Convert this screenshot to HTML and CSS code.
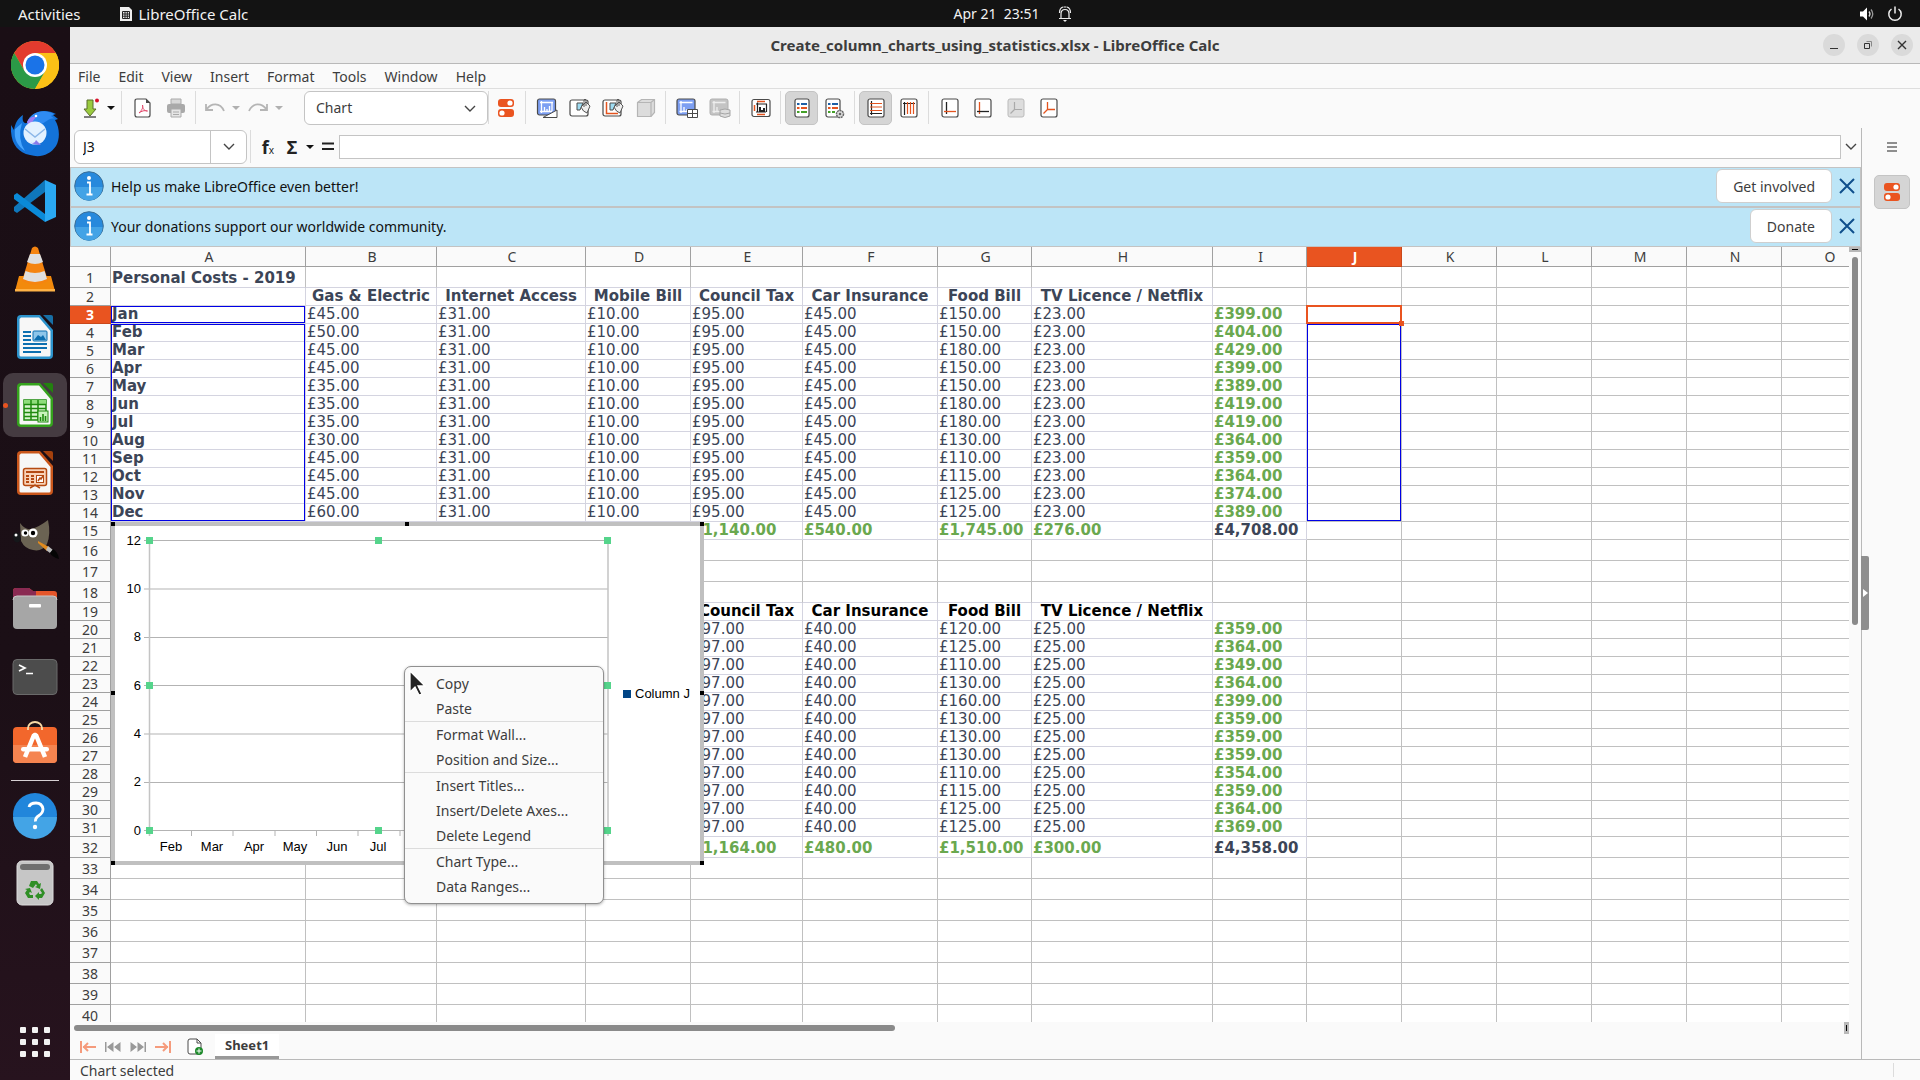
FILE: index.html
```html
<!DOCTYPE html>
<html lang="en">
<head>
  <meta charset="utf-8">
  <title>Create_column_charts_using_statistics.xlsx - LibreOffice Calc</title>
  <link rel="stylesheet" href="styles.css">
</head>
<body>
<header class="topbar">
  <div class="topbar-left">
    <button class="topbar-item">Activities</button>
    <button class="topbar-item app-menu">
      <svg width="14" height="16" viewBox="0 0 14 16"><path d="M1 1h9l3 3v11H1z" fill="#eee"/><path d="M3.500 5.500h7v7h-7zM3.500 8h7M3.500 10.200h7M6 5.500v7M8.300 5.500v7" stroke="#222" fill="none"/></svg>
      LibreOffice Calc
    </button>
  </div>
  <div class="topbar-clock">
    <span>Apr 21&nbsp; 23:51</span>
    <svg width="14" height="16" viewBox="0 0 14 16" fill="none" stroke="#eee" stroke-width="1.200"><path d="M1 12.500h12M3 12V8q0-4.500 4-4.500T11 8v4M1.500 7Q1.500 2 5 1M12.500 7Q12.500 2 9 1M5.500 1h3"/><path d="M5 14h4l-2 2z" fill="#eee" stroke="none"/></svg>
  </div>
  <div class="topbar-right">
    <svg width="16" height="16" viewBox="0 0 16 16"><path d="M1 5.500h3L8 1.500v13L4 10.500H1z" fill="#fff"/><path d="M10 5.500q2 2.500 0 5" fill="none" stroke="#ddd" stroke-width="1.300"/><path d="M12 3.500q3.500 4.500 0 9" fill="none" stroke="#999" stroke-width="1.300"/></svg>
    <svg width="16" height="16" viewBox="0 0 16 16" fill="none" stroke="#eee" stroke-width="1.500"><path d="M4.500 3a6.200 6.200 0 1 0 7 0M8 .5v7"/></svg>
  </div>
</header>

<div class="desktop">
  <nav class="dock">
    <button class="dock-item" aria-label="Google Chrome">
      <svg width="48" height="48" viewBox="0 0 48 48"><circle cx="24" cy="24" r="24" fill="#fbc116"/><path d="M3.200 12A24 24 0 0 1 44.800 12H24L13.600 30z" fill="#e33b2e"/><path d="M3.200 12A24 24 0 0 0 24 48L34.400 30 24 24 13.600 30z" fill="#2b9a47"/><path d="M24 12h20.800A24 24 0 0 1 24 48l10.400-18z" fill="#fbc116"/><circle cx="24" cy="24" r="12" fill="#fff"/><circle cx="24" cy="24" r="9.500" fill="#1a73e8"/></svg>
    </button>
    <button class="dock-item" aria-label="Thunderbird">
      <svg width="48" height="48" viewBox="0 0 48 48"><path d="M16 14C20 2 34-1 45 5l-3 1 5 4-3 1c5 8 5 19 1 26-6 9-16 12-26 9C6 43-1 34 0 16l3 5C4 14 7 9 12 6c-1 5 0 9 4 8z" fill="#1373d9"/><path d="M16 13C20 3 32-1 43 5l-3 2 4 3c-6-2-9 4-14 5-5 0-8-3-14-2z" fill="#2f8bf2"/><path d="M4 20q-2 14 10 22Q6 30 11 14z" fill="#47a6ff"/><path d="M16 13q3-6 9-5-3 5-8 8z" fill="#a27cf0"/><circle cx="24" cy="24" r="11.500" fill="#e3f1ff"/><path d="M14 20l10 8 10-8" fill="none" stroke="#8cb7e8" stroke-width="1.500"/><path d="M15 31q8 6 10 0l5 5q-8 0-15-5z" fill="#8b7bea"/><circle cx="25" cy="7" r="1.300" fill="#fff"/></svg>
    </button>
    <button class="dock-item" aria-label="Visual Studio Code">
      <svg width="48" height="48" viewBox="0 0 48 48"><path d="M34 3L3 30v4l3 2 28-21z" fill="#0f77bb"/><path d="M3 18l3-2 28 21v8L3 22z" fill="#0a8ad8"/><path d="M34 3l11 5v32l-11 5z" fill="#2aa8f2"/></svg>
    </button>
    <button class="dock-item" aria-label="VLC">
      <svg width="48" height="48" viewBox="0 0 48 48"><path d="M8 31h32l4 15H4z" fill="#f28a0c"/><path d="M4 44h40v2.500H4z" fill="#ffb347"/><path d="M21 3q3-3 6 0l10 33q-13 7-26 0z" fill="#f58410"/><path d="M19 9h10l3 8q-8 4-16 0zM14.500 26q9.500 4 19 0l2.500 8q-12 6-24 0z" fill="#dfdfdf"/></svg>
    </button>
    <button class="dock-item" aria-label="LibreOffice Writer">
      <svg width="48" height="48" viewBox="0 0 48 48"><path d="M10 2h19l13 15v25q0 4-4 4H10q-4 0-4-4V6q0-4 4-4z" fill="#2c93cc"/><path d="M10 4.500h18l11.500 13.500V42q0 1.500-1.500 1.500H10q-1.500 0-1.500-1.500V6z" fill="#f7f7f7"/><path d="M32 2h8q2 0 2 2v8z" fill="#176fa6"/><path d="M12 19h8M12 23h8M12 27h8M12 31h24M12 35h24M12 39h18" stroke="#0d6fb0" stroke-width="2"/><rect x="22" y="18" width="14" height="10" rx="1" fill="#8ec6ea" stroke="#0d6fb0"/><path d="M23 27l4-5 3 2 2-2 3 5z" fill="#0d6fb0"/></svg>
    </button>
    <button class="dock-item active" aria-label="LibreOffice Calc">
      <svg width="48" height="48" viewBox="0 0 48 48"><path d="M10 2h19l13 15v25q0 4-4 4H10q-4 0-4-4V6q0-4 4-4z" fill="#35a31d"/><path d="M10 4.500h18l11.500 13.500V42q0 1.500-1.500 1.500H10q-1.500 0-1.500-1.500V6z" fill="#f7f7f7"/><path d="M32 2h8q2 0 2 2v8z" fill="#23810f"/><path d="M13 19h22v20H13z" fill="#d8f5cf" stroke="#1e8a0e" stroke-width="1.500"/><path d="M13 19h22v4H13z" fill="#8fdc7c"/><path d="M13 23.500h22M13 27.500h22M13 31.500h22M13 35.500h22M20 19v20M27 19v20" stroke="#1e8a0e" stroke-width="1.500"/><rect x="27" y="30" width="10" height="11" fill="#c9f3bc" stroke="#1e8a0e"/><path d="M29.500 40v-4M32 40v-7M34.500 40v-5" stroke="#1e8a0e" stroke-width="1.600"/></svg>
    </button>
    <button class="dock-item" aria-label="LibreOffice Impress">
      <svg width="48" height="48" viewBox="0 0 48 48"><path d="M10 2h19l13 15v25q0 4-4 4H10q-4 0-4-4V6q0-4 4-4z" fill="#c9561b"/><path d="M10 4.500h18l11.500 13.500V42q0 1.500-1.500 1.500H10q-1.500 0-1.500-1.500V6z" fill="#f7f7f7"/><path d="M32 2h8q2 0 2 2v8z" fill="#a5410d"/><rect x="12.500" y="19.500" width="23" height="17" rx="2" fill="#f9d3b8" stroke="#b54a12" stroke-width="1.500"/><path d="M15 23h18M15 27h3M15 30h3M15 33h3M20 27h3M20 30h3M20 33h3" stroke="#b54a12" stroke-width="1.800"/><rect x="25.500" y="26.500" width="7" height="7" fill="#fff" stroke="#b54a12"/><path d="M27 32l2-3 1 1 2-3M19 39l5-3 5 3" fill="none" stroke="#b54a12" stroke-width="1.500"/></svg>
    </button>
    <button class="dock-item" aria-label="GIMP">
      <svg width="48" height="48" viewBox="0 0 48 48"><path d="M9 6q5 7 11 6 8-2 17-9 3 14-1 24-5 8-14 6-8-1-12-9z" fill="#6b6353"/><path d="M2 20q0-6 6-4 3 5 0 9-5 2-6-5z" fill="#15171a"/><circle cx="5" cy="18" r="1.500" fill="#fff"/><circle cx="14" cy="16" r="3.600" fill="#fff"/><circle cx="22" cy="16" r="4.600" fill="#fff"/><circle cx="14.500" cy="16" r="1.700"/><circle cx="22" cy="16" r="2.200"/><path d="M27 24l11 6-2 4-9-8z" fill="#e08a1e"/><path d="M37 29l5 4-3 3-4-3z" fill="#bbb"/><path d="M42 32q5 3 6 10-7-2-9-6z" fill="#050505"/></svg>
    </button>
    <button class="dock-item" aria-label="Files">
      <svg width="48" height="48" viewBox="0 0 48 48"><path d="M2 6q0-3 3-3h13l4 3h21q3 0 3 3v10H2z" fill="#e5562a"/><path d="M2 6q0-3 3-3h13l4 3 3 0v10H2z" fill="#8a2a52"/><rect x="2" y="11" width="44" height="33" rx="4" fill="#a6a6a6"/><path d="M2 15q0-4 4-4h36q4 0 4 4" fill="none" stroke="#c9c9c9"/><rect x="18" y="19" width="12" height="3.500" rx="1" fill="#fff"/></svg>
    </button>
    <button class="dock-item" aria-label="Terminal">
      <svg width="48" height="48" viewBox="0 0 48 48"><rect x="2" y="6.500" width="44" height="35" rx="4" fill="#4c4c4c" stroke="#6a6a6a"/><path d="M8 12l6 3-6 3M15 20.500h7" fill="none" stroke="#fff" stroke-width="1.700"/></svg>
    </button>
    <button class="dock-item" aria-label="Ubuntu Software">
      <svg width="48" height="48" viewBox="0 0 48 48"><rect x="2" y="6" width="44" height="36" rx="4" fill="#f2672c"/><path d="M2 24h44v14q0 4-4 4H6q-4 0-4-4z" fill="#f58450"/><path d="M17 9V7a7 6 0 0 1 14 0v2" fill="none" stroke="#f7d9a6" stroke-width="1.800"/><path d="M14 36l9-22h2l9 22" fill="none" stroke="#fff" stroke-width="4.500" stroke-linejoin="bevel"/><rect x="10" y="26" width="28" height="4.500" rx="2.200" fill="#fff"/></svg>
    </button>
    <div class="dock-line"></div>
    <button class="dock-item" aria-label="Help">
      <svg width="48" height="48" viewBox="0 0 48 48"><circle cx="24" cy="24" r="22" fill="#2186db"/><path d="M2 26a22 22 0 0 0 44 0z" fill="#43a4e6"/><path d="M18 16q1-4 7-4t7 6q0 4-4 6.500t-3.500 6" fill="none" stroke="#fff" stroke-width="2.800"/><circle cx="24" cy="36" r="2.200" fill="#fff"/></svg>
    </button>
    <button class="dock-item" aria-label="Trash">
      <svg width="48" height="48" viewBox="0 0 48 48"><rect x="6" y="2" width="36" height="44" rx="5" fill="#c6c6c6" stroke="#ddd"/><rect x="9" y="5" width="30" height="6" rx="3" fill="#6f6f6f"/><path d="M20 22h6l2 3 2-1-1 6-5-2 2-1-1-2-3 4-4-2zM31 29l3 5-3 5h-3v2l-4-4 4-4v2h2l1-1-2-3zM22 39h-5l-3-5 2-3-2-1 5-1 2 5-2-1-1 1 1 2h3z" fill="#2f8f26"/></svg>
    </button>
    <button class="dock-item apps" aria-label="Show Applications">
      <svg width="48" height="48" viewBox="0 0 48 48" fill="#f2f2f2"><rect x="9" y="9" width="6" height="6" rx="1"/><rect x="21" y="9" width="6" height="6" rx="1"/><rect x="33" y="9" width="6" height="6" rx="1"/><rect x="9" y="21" width="6" height="6" rx="1"/><rect x="21" y="21" width="6" height="6" rx="1"/><rect x="33" y="21" width="6" height="6" rx="1"/><rect x="9" y="33" width="6" height="6" rx="1"/><rect x="21" y="33" width="6" height="6" rx="1"/><rect x="33" y="33" width="6" height="6" rx="1"/></svg>
    </button>
  </nav>

  <main class="window">
    <div class="titlebar">
      <h1 class="title">Create_column_charts_using_statistics.xlsx - LibreOffice Calc</h1>
      <div class="window-buttons">
        <button aria-label="Minimize"><svg width="10" height="10"><path d="M1 8.500h8" stroke="#333"/></svg></button>
        <button aria-label="Restore"><svg width="10" height="10" fill="none"><path d="M1.500 3.500h5v5h-5z" stroke="#333"/><path d="M3.500 1.500h5v5" stroke="#888"/></svg></button>
        <button aria-label="Close"><svg width="10" height="10"><path d="M1 1l8 8M9 1l-8 8" stroke="#333" stroke-width="1.400"/></svg></button>
      </div>
    </div>

    <nav class="menubar">
      <button>File</button>
      <button>Edit</button>
      <button>View</button>
      <button>Insert</button>
      <button>Format</button>
      <button>Tools</button>
      <button>Window</button>
      <button>Help</button>
    </nav>

    <div class="toolbar">
      <button class="tool split" aria-label="Save"><svg width="20" height="20" viewBox="0 0 20 20"><path d="M7 2h6v9h3l-6 7-6-7h3z" fill="#9acb3f" stroke="#5b6e2c"/><path d="M4 19h12" stroke="#555" stroke-width="1.500"/><circle cx="17" cy="2.500" r="2" fill="#d8112b"/></svg></button>
      <button class="caret" aria-label="Save options"></button>
      <span class="sep"></span>
      <button class="tool" aria-label="Export as PDF"><svg width="20" height="20" viewBox="0 0 20 20"><path d="M4 1h9l4 4v12q0 2-2 2H4q-2 0-2-2V3q0-2 2-2z" fill="#fff" stroke="#4a4a4a" stroke-width="1.200"/><path d="M13 1v4h4z" fill="#4a4a4a"/><path d="M6 15c4-4 4-6 3.500-8 0 4 2 6 5 6-3-1-6 0-8.500 2z" fill="none" stroke="#e2486a"/></svg></button>
      <button class="tool" aria-label="Print" disabled><svg width="20" height="20" viewBox="0 0 20 20"><path d="M5 1h10v5H5z" fill="#d8d8d8" stroke="#aaa"/><rect x="1" y="6" width="18" height="9" rx="2" fill="#a9a9a9"/><path d="M5 11h10v8H5z" fill="#e6e6e6" stroke="#aaa"/><path d="M7 14h6M7 16.500h6" stroke="#aaa"/></svg></button>
      <span class="sep"></span>
      <button class="tool split" aria-label="Undo" disabled><svg width="20" height="20" viewBox="0 0 20 20" fill="none" stroke="#b5b5b5" stroke-width="1.800"><path d="M1 6v6h7M1.500 11.500C6 5 15 4 19 13"/></svg></button>
      <button class="caret off" aria-label="Undo list" disabled></button>
      <button class="tool split" aria-label="Redo" disabled><svg width="20" height="20" viewBox="0 0 20 20" fill="none" stroke="#b5b5b5" stroke-width="1.800"><path d="M19 6v6h-7M18.500 11.500C14 5 5 4 1 13"/></svg></button>
      <button class="caret off" aria-label="Redo list" disabled></button>
      <div class="combo">
        <select aria-label="Select Chart Element"><option>Chart</option></select>
        <svg width="12" height="8" class="chevron"><path d="M1 1l5 5 5-5" fill="none" stroke="#444" stroke-width="1.400"/></svg>
      </div>
      <span class="sep tight"></span>
      <button class="tool" aria-label="Format Selection"><svg width="16" height="18" viewBox="0 0 16 18"><rect y="0" width="16" height="8" rx="3" fill="#ea5420"/><circle cx="12" cy="4" r="2.600" fill="#fff"/><rect y="10" width="16" height="8" rx="3" fill="#ea5420"/><circle cx="4" cy="14" r="2.600" fill="#fff"/></svg></button>
      <span class="sep"></span>
      <button class="tool" aria-label="Chart Type"><svg width="22" height="20" viewBox="0 0 22 20"><rect x="1.500" y="1" width="18" height="16" rx="2" fill="#7d9ff2" stroke="#4a4a4a" stroke-width="1.200"/><path d="M5.500 3v12M4 4.500h13M16 4.500V13M4 13.500h12M8.500 13V9M11 13V11M13.500 13V8" stroke="#fff" stroke-width="1.300" fill="none"/><path d="M7 19.500h14V12z" fill="#fff" stroke="#4a4a4a"/></svg></button>
      <button class="tool" aria-label="Chart Area"><svg width="22" height="20" viewBox="0 0 22 20"><rect x="1" y="2" width="18" height="16" rx="2" fill="#fff" stroke="#4a4a4a" stroke-width="1.200"/><path d="M8 12V5h6l-3 7z" fill="#9fdcf2" stroke="#4a4a4a"/><path d="M12 9l5-5 4 4-3 7q-4-1-6-6z" fill="#eee" stroke="#555"/><path d="M15 9V2q1-2 2 0v6" fill="none" stroke="#555"/></svg></button>
      <button class="tool" aria-label="Chart Wall"><svg width="22" height="20" viewBox="0 0 22 20"><rect x="1" y="2" width="18" height="16" rx="2" fill="#fff" stroke="#4a4a4a" stroke-width="1.200"/><path d="M4.500 4v11.500H16" fill="none" stroke="#e4541f" stroke-width="1.500"/><path d="M8 12V5h6l-3 7z" fill="#9fdcf2" stroke="#4a4a4a"/><path d="M12 9l5-5 4 4-3 7q-4-1-6-6z" fill="#eee" stroke="#555"/><path d="M15 9V2q1-2 2 0v6" fill="none" stroke="#555"/></svg></button>
      <button class="tool" aria-label="3D View" disabled><svg width="20" height="20" viewBox="0 0 20 20" fill="#dcdcdc" stroke="#b5b5b5" stroke-width="1.200"><path d="M1.500 4.500l4-3h13v13l-3.500 4H1.500z"/><path d="M1.500 4.500H15l3.500-3M15 4.500v14" fill="none"/></svg></button>
      <span class="sep"></span>
      <button class="tool" aria-label="Data Ranges"><svg width="22" height="20" viewBox="0 0 22 20"><rect x="1" y="1" width="18" height="16" rx="2" fill="#7d9ff2" stroke="#4a4a4a" stroke-width="1.200"/><path d="M5 3v12M3.500 4.500h13M3.500 13.500h8M8 13V9M11 13V11" stroke="#fff" stroke-width="1.300"/><path d="M11.500 11.500h10v8h-10zM16.500 11.500v8M11.500 15.500h10" fill="#fff" stroke="#4a4a4a"/></svg></button>
      <button class="tool" aria-label="Data Table" disabled><svg width="22" height="20" viewBox="0 0 22 20"><rect x="1" y="1" width="18" height="16" rx="2" fill="#c4c4c4" stroke="#b0b0b0"/><path d="M5 3v12M3.500 4.500h13M3.500 13.500h8M8 13V9" stroke="#eee" stroke-width="1.300"/><path d="M11 12v6q5 3 10 0v-6q-5-2-10 0zM11 15q5 2 10 0" fill="#ddd" stroke="#a5a5a5"/></svg></button>
      <span class="sep"></span>
      <button class="tool" aria-label="Titles"><svg width="20" height="20" viewBox="0 0 20 20"><rect x="1" y="1.500" width="18" height="17" rx="2" fill="#fff" stroke="#4a4a4a" stroke-width="1.200"/><path d="M6 3.500h8M3.500 7v6M6 16.500h8" stroke="#e4541f" stroke-width="1.500"/><path d="M6.500 4.500v10M5 6h11M15.500 6v8M5 14h10" stroke="#222" stroke-width="1.200"/><path d="M8 14V9h2v3h2v-2h2v4z" fill="#222"/></svg></button>
      <span class="sep"></span>
      <button class="tool pressed" aria-label="Legend On/Off"><svg width="16" height="20" viewBox="0 0 16 20"><rect x="1" y="1" width="14" height="18" rx="2" fill="#fff" stroke="#4a4a4a" stroke-width="1.200"/><path d="M3 6h2.500M7 6h6" stroke="#1d5fa6" stroke-width="2"/><path d="M3 10h2.500M7 10h6" stroke="#e4541f" stroke-width="2"/><path d="M3 14h2.500M7 14h6" stroke="#43a027" stroke-width="2"/></svg></button>
      <button class="tool" aria-label="Legend"><svg width="20" height="22" viewBox="0 0 20 22"><rect x="1" y="2" width="14" height="18" rx="2" fill="#fff" stroke="#4a4a4a" stroke-width="1.200"/><path d="M3 7h2.500M7 7h6" stroke="#1d5fa6" stroke-width="2"/><path d="M3 11h2.500M7 11h6" stroke="#e4541f" stroke-width="2"/><path d="M3 15h2.500M7 15h3" stroke="#43a027" stroke-width="2"/><circle cx="15" cy="17" r="3.500" fill="#ddd" stroke="#666" stroke-width="1.500" stroke-dasharray="2 .6"/><circle cx="15" cy="17" r="1.300" fill="#666"/></svg></button>
      <span class="sep"></span>
      <button class="tool pressed" aria-label="Horizontal Grids"><svg width="18" height="20" viewBox="0 0 18 20"><rect x="1" y="1" width="16" height="18" rx="2" fill="#fff" stroke="#4a4a4a" stroke-width="1.200"/><path d="M4.500 3v14M3 15.500h12" stroke="#222" stroke-width="1.200"/><path d="M3 5.500h12M3 9h12M3 12.500h12" stroke="#e4541f" stroke-width="1.200"/></svg></button>
      <button class="tool" aria-label="Vertical Grids"><svg width="18" height="20" viewBox="0 0 18 20"><rect x="1" y="1" width="16" height="18" rx="2" fill="#fff" stroke="#4a4a4a" stroke-width="1.200"/><path d="M4.500 4v13M3 5.500h12" stroke="#222" stroke-width="1.200"/><path d="M7.500 4v12M10.500 4v12M13.500 4v12" stroke="#e4541f" stroke-width="1.200"/></svg></button>
      <span class="sep"></span>
      <button class="tool" aria-label="X Axis"><svg width="18" height="20" viewBox="0 0 18 20"><rect x="1" y="1" width="16" height="18" rx="2" fill="#fff" stroke="#4a4a4a" stroke-width="1.200"/><path d="M5.500 4v12" stroke="#222" stroke-width="1.300"/><path d="M3 13.500h12" stroke="#e4541f" stroke-width="1.300"/></svg></button>
      <button class="tool" aria-label="Y Axis"><svg width="18" height="20" viewBox="0 0 18 20"><rect x="1" y="1" width="16" height="18" rx="2" fill="#fff" stroke="#4a4a4a" stroke-width="1.200"/><path d="M5.500 4v12" stroke="#e4541f" stroke-width="1.300"/><path d="M3 13.500h12" stroke="#222" stroke-width="1.300"/></svg></button>
      <button class="tool" aria-label="Z Axis" disabled><svg width="18" height="20" viewBox="0 0 18 20"><rect x="1" y="1" width="16" height="18" rx="2" fill="#ddd" stroke="#bbb"/><path d="M7.500 4v7.500H15M7.500 11.500l-4 4" fill="none" stroke="#aaa" stroke-width="1.200"/></svg></button>
      <button class="tool" aria-label="All Axes"><svg width="18" height="20" viewBox="0 0 18 20"><rect x="1" y="1" width="16" height="18" rx="2" fill="#fff" stroke="#4a4a4a" stroke-width="1.200"/><path d="M7.500 4v7.500H15M7.500 11.500l-4 4" fill="none" stroke="#e4541f" stroke-width="1.300"/></svg></button>
    </div>

    <div class="work">
      <section class="main-pane">
        <div class="formula-bar">
          <div class="name-box">
            <input type="text" value="J3" aria-label="Name Box">
            <button aria-label="Cell list"><svg width="12" height="8"><path d="M1 1l5 5 5-5" fill="none" stroke="#444" stroke-width="1.400"/></svg></button>
          </div>
          <span class="sep"></span>
          <button class="fn" aria-label="Function Wizard"><b>f</b><small>x</small></button>
          <button class="fn" aria-label="Select Function"><b>Σ</b></button>
          <button class="caret" aria-label="Function list"></button>
          <button class="fn equals" aria-label="Formula"><svg width="12" height="9"><path d="M0 1.500h12M0 7h12" stroke="#222" stroke-width="2"/></svg></button>
          <input type="text" class="formula-input" aria-label="Input line">
          <button class="expand" aria-label="Expand Formula Bar"><svg width="12" height="8"><path d="M1 1l5 5 5-5" fill="none" stroke="#444" stroke-width="1.400"/></svg></button>
        </div>

        <div class="infobar">
          <svg width="30" height="30" viewBox="0 0 30 30"><circle cx="15" cy="15" r="14.300" fill="#2789dc" stroke="#3c6f96"/><path d="M1.500 16a13.500 13.500 0 0 0 27 0z" fill="#43a3e6"/><circle cx="15" cy="7" r="2" fill="#fff"/><path d="M13 11.500h3V23M12.500 23.500h6" stroke="#fff" stroke-width="1.800" fill="none"/></svg>
          <p>Help us make LibreOffice even better!</p>
          <button class="action">Get involved</button>
          <button class="dismiss" aria-label="Close Infobar"><svg width="16" height="16"><path d="M1 1l14 14M15 1L1 15" stroke="#0f4f8c" stroke-width="2"/></svg></button>
        </div>
        <div class="infobar">
          <svg width="30" height="30" viewBox="0 0 30 30"><circle cx="15" cy="15" r="14.300" fill="#2789dc" stroke="#3c6f96"/><path d="M1.500 16a13.500 13.500 0 0 0 27 0z" fill="#43a3e6"/><circle cx="15" cy="7" r="2" fill="#fff"/><path d="M13 11.500h3V23M12.500 23.500h6" stroke="#fff" stroke-width="1.800" fill="none"/></svg>
          <p>Your donations support our worldwide community.</p>
          <button class="action">Donate</button>
          <button class="dismiss" aria-label="Close Infobar"><svg width="16" height="16"><path d="M1 1l14 14M15 1L1 15" stroke="#0f4f8c" stroke-width="2"/></svg></button>
        </div>

        <div class="grid-row">
          <div class="sheet">
            <table class="cells">
              <colgroup>
                <col class="w-head"><col class="w-a"><col class="w-b"><col class="w-c"><col class="w-d">
                <col class="w-e"><col class="w-f"><col class="w-g"><col class="w-h"><col class="w-i">
                <col class="w-j" span="6">
              </colgroup>
              <thead><tr id="columns"></tr></thead>
              <tbody id="rows"></tbody>
            </table>

            <!-- referenced ranges and the cell cursor -->
            <div class="range range-label"></div>
            <div class="range range-categories"></div>
            <div class="range range-values"></div>
            <div class="cursor-cell"></div>

            <div class="chart">
              <svg width="593" height="343" viewBox="0 0 593 343">
                <g stroke="#b3b3b3" fill="none">
                  <path d="M33 18.500h464M33 67h464M33 115.500h464M33 163.500h464M33 212h464M33 260.500h464M33 308.500h464"/>
                  <path d="M38.500 18v296M497 18v296" stroke="#c4c4c4" stroke-width="1.500"/>
                  <path d="M80.500 309v5M122 309v5M164 309v5M205.500 309v5M247 309v5M289 309v5M330.500 309v5M372 309v5M414 309v5M455.500 309v5"/>
                </g>
                <g class="axis-y" text-anchor="end">
                  <text x="30" y="23">12</text><text x="30" y="71">10</text><text x="30" y="119">8</text><text x="30" y="168">6</text><text x="30" y="216">4</text><text x="30" y="264">2</text><text x="30" y="313">0</text>
                </g>
                <g class="axis-x" text-anchor="middle">
                  <text x="60" y="329">Feb</text><text x="101" y="329">Mar</text><text x="143" y="329">Apr</text><text x="184" y="329">May</text><text x="226" y="329">Jun</text><text x="267" y="329">Jul</text>
                </g>
                <rect x="512" y="168" width="8" height="8" fill="#004586"/>
                <text x="524" y="176">Column J</text>
                <g fill="#55d48b">
                  <rect x="35" y="15" width="7" height="7"/><rect x="264" y="15" width="7" height="7"/><rect x="493" y="15" width="7" height="7"/>
                  <rect x="35" y="160" width="7" height="7"/><rect x="493" y="160" width="7" height="7"/>
                  <rect x="35" y="305" width="7" height="7"/><rect x="264" y="305" width="7" height="7"/><rect x="493" y="305" width="7" height="7"/>
                </g>
                <rect x="2" y="2" width="589" height="339" fill="none" stroke="#c0c0c0" stroke-width="4"/>
                <path d="M0 0h4v4H0zM294 0h4v4h-4zM589 0h4v4h-4zM0 169h4v4H0zM589 169h4v4h-4zM0 339h4v4H0zM589 339h4v4h-4z"/>
              </svg>
            </div>

            <div class="context-menu">
              <button>Copy</button>
              <button>Paste</button>
              <hr>
              <button>Format Wall...</button>
              <button>Position and Size...</button>
              <hr>
              <button>Insert Titles...</button>
              <button>Insert/Delete Axes...</button>
              <button>Delete Legend</button>
              <hr>
              <button>Chart Type...</button>
              <button>Data Ranges...</button>
              <svg class="pointer" width="17" height="27" viewBox="0 0 17 27"><path d="M1 1v21l5-5 4 8 3-1-4-8h7z" fill="#222" stroke="#fff" stroke-width="1.300"/></svg>
            </div>
          </div>
          <div class="vscroll">
            <div class="splitter"></div>
            <div class="vthumb"></div>
          </div>
        </div>

        <div class="hscroll">
          <div class="hthumb"></div>
          <div class="hsplitter"></div>
        </div>

        <div class="tabbar">
          <button aria-label="First sheet"><svg width="16" height="12" fill="none" stroke="#f59b7c" stroke-width="2"><path d="M1 0v12M3 6h13M8 2L4 6l4 4"/></svg></button>
          <button aria-label="Previous sheet"><svg width="16" height="10" fill="#999"><path d="M0 0h1.500v10H0zM8.500 0v10L2 5zM15.500 0v10L9 5z"/></svg></button>
          <button aria-label="Next sheet"><svg width="16" height="10" fill="#999"><path d="M14.500 0H16v10h-1.500zM.5 0v10L7 5zM7.500 0v10L14 5z"/></svg></button>
          <button aria-label="Last sheet"><svg width="16" height="12" fill="none" stroke="#f59b7c" stroke-width="2"><path d="M15 0v12M0 6h13M8 2l4 4-4 4"/></svg></button>
          <button class="add" aria-label="Add sheet"><svg width="17" height="18" viewBox="0 0 17 18"><path d="M3 1h7l4 4v10q0 1-1 1H3q-2 0-2-2V3q0-2 2-2z" fill="#fff" stroke="#4a4a4a"/><path d="M10 1v4h4" fill="none" stroke="#4a4a4a"/><circle cx="12" cy="13" r="4" fill="#1d8a2b"/><path d="M12 10.500v5M9.500 13h5" stroke="#fff"/></svg></button>
          <button class="tab">Sheet1</button>
        </div>
      </section>

      <aside class="sidebar">
        <button class="side-menu" aria-label="Sidebar Settings"><svg width="10" height="10"><path d="M0 1h10M0 5h10M0 9h10" stroke="#222" stroke-width="1.200"/></svg></button>
        <button class="side-tab" aria-label="Properties"><svg width="16" height="18" viewBox="0 0 16 18"><rect width="16" height="8" rx="3" fill="#ea5420"/><circle cx="12" cy="4" r="2.600" fill="#fff"/><rect y="10" width="16" height="8" rx="3" fill="#ea5420"/><circle cx="4" cy="14" r="2.600" fill="#fff"/></svg></button>
        <button class="side-handle" aria-label="Show sidebar"><svg width="5" height="8"><path d="M0 0l5 4-5 4z" fill="#fff"/></svg></button>
      </aside>
    </div>

    <footer class="statusbar">
      <span>Chart selected</span>
      <i class="status-sep"></i>
    </footer>
  </main>
</div>

<script src="script.js"></script>
</body>
</html>
```
FILE: styles.css
```css
html, body {
  margin: 0;
  padding: 0;
  height: 100%;
}

body {
  display: flex;
  flex-direction: column;
  overflow: hidden;
  font-family: "Noto Sans", sans-serif;
  font-size: 14px;
  color: #3d3d3d;
  background: #fafafa;
}

* {
  box-sizing: border-box;
}

button {
  display: flex;
  align-items: center;
  justify-content: center;
  margin: 0;
  padding: 0;
  border: 0;
  background: none;
  font: inherit;
  color: inherit;
}

input, select {
  font: inherit;
  color: #111;
}

svg {
  flex: none;
}

/* top bar */
.topbar {
  display: flex;
  flex: 0 0 27px;
  align-items: center;
  background: #131313;
  color: #f2f2f2;
}

.topbar-left, .topbar-right {
  display: flex;
  flex: 1 1 0;
  align-items: center;
}

.topbar-left {
  gap: 38px;
  padding-left: 18px;
  font-size: 15px;
}

.app-menu {
  gap: 6px;
}

.topbar-clock {
  display: flex;
  align-items: center;
  gap: 18px;
  padding-left: 104px;
}

.topbar-right {
  justify-content: flex-end;
  gap: 12px;
  padding-right: 17px;
}

.desktop {
  display: flex;
  flex: 1 1 0;
  min-height: 0;
}

/* dock */
.dock {
  display: flex;
  flex: 0 0 70px;
  flex-direction: column;
  align-items: center;
  padding: 6px 0;
  background: linear-gradient(#1a0e15, #1b0f16 60%, #27131e);
}

.dock-item {
  position: relative;
  width: 64px;
  height: 64px;
  margin-bottom: 4px;
  border-radius: 10px;
}

.dock-item.active {
  background: #453b41;
}

.dock-item.active::before {
  content: "";
  position: absolute;
  left: 0;
  top: 30px;
  width: 5px;
  height: 5px;
  border-radius: 50%;
  background: #e95420;
}

.dock-line {
  width: 48px;
  height: 1px;
  margin: -1px 0 2px;
  background: #d6d0d3;
}

.dock-item.apps {
  margin-top: auto;
  margin-bottom: 0;
}

/* window */
.window {
  display: flex;
  flex: 1 1 0;
  flex-direction: column;
  min-width: 0;
}

.titlebar {
  display: flex;
  flex: 0 0 37px;
  align-items: center;
  padding: 0 7px 0 97px;
  border-bottom: 1px solid #b9b9b9;
  background: #ebebeb;
}

.title {
  flex: 1;
  margin: 0;
  font-size: 15px;
  font-weight: bold;
  text-align: center;
}

.window-buttons {
  display: flex;
  gap: 12px;
}

.window-buttons button {
  width: 22px;
  height: 22px;
  border-radius: 50%;
  background: #dadada;
}

.menubar {
  display: flex;
  flex: 0 0 25px;
  gap: 18px;
  padding-left: 8px;
  border-bottom: 1px solid #dedede;
}

.toolbar {
  display: flex;
  flex: 0 0 39px;
  align-items: center;
  padding: 0 0 2px 5px;
}

.tool {
  width: 33px;
  height: 34px;
  border: 1px solid transparent;
  border-radius: 5px;
}

.tool.split {
  width: 29px;
}

.tool.pressed {
  border-color: #c4c4c4;
  background: #d5d5d5;
}

.caret {
  width: 14px;
  height: 34px;
}

.caret::before {
  content: "";
  border: 4px solid transparent;
  border-top-color: #111;
  border-bottom: 0;
}

.caret.off::before {
  border-top-color: #b0b0b0;
}

.sep {
  flex: none;
  width: 1px;
  height: 33px;
  margin: 0 4px 0 3px;
  background: #dcdcdc;
}

.sep.tight {
  margin: 0;
}

.combo {
  position: relative;
  width: 184px;
  height: 34px;
  margin-left: 18px;
}

.combo select {
  width: 100%;
  height: 100%;
  padding: 0 11px;
  appearance: none;
  border: 1px solid #c4c4c4;
  border-radius: 6px;
  background: #fff;
  color: #3d3d3d;
}

.combo .chevron {
  position: absolute;
  right: 12px;
  top: 14px;
  pointer-events: none;
}

.work {
  display: flex;
  flex: 1 1 0;
  min-height: 0;
}

.main-pane {
  display: flex;
  flex: 1 1 0;
  flex-direction: column;
  min-width: 0;
}

/* formula bar */
.formula-bar {
  display: flex;
  flex: 0 0 39px;
  align-items: center;
  padding: 0 0 2px 4px;
}

.name-box {
  display: flex;
  width: 173px;
  height: 34px;
  border: 1px solid #c4c4c4;
  border-radius: 6px;
  background: #fff;
}

.name-box input {
  flex: 1;
  min-width: 0;
  padding: 0 8px;
  border: 0;
  background: none;
}

.name-box button {
  width: 36px;
  border-left: 1px solid #c4c4c4;
}

.fn {
  width: 22px;
  margin-left: 2px;
  height: 33px;
  font-size: 18px;
  color: #222;
}

.fn small {
  align-self: flex-end;
  padding-bottom: 6px;
  font-size: 10px;
}

.equals {
  margin: 0;
}

.formula-input {
  flex: 1;
  min-width: 0;
  height: 24px;
  border: 1px solid #c4c4c4;
  background: #fff;
}

.expand {
  width: 20px;
}

/* infobars */
.infobar {
  display: flex;
  flex: 0 0 40px;
  align-items: center;
  padding: 0 5px 2px 3px;
  border: 1px solid #c3c3c3;
  background: #bce5f7;
  color: #111;
}

.infobar p {
  flex: 1;
  margin: 0 0 0 7px;
}

.action {
  height: 34px;
  padding: 0 16px;
  border: 1px solid #cfcfcf;
  border-radius: 6px;
  background: #fff;
  color: #3d3d3d;
}

.dismiss {
  margin-left: 7px;
}

/* sheet */
.grid-row {
  display: flex;
  flex: 1 1 0;
  min-height: 0;
}

.sheet {
  position: relative;
  flex: 1 1 0;
  min-width: 0;
  overflow: hidden;
  background: #fff;
}

.cells {
  width: 1807px;
  table-layout: fixed;
  border-collapse: separate;
  border-spacing: 0;
  color: #3c4557;
}

.w-head { width: 41px; }
.w-a { width: 195px; }
.w-b { width: 131px; }
.w-c { width: 149px; }
.w-d { width: 105px; }
.w-e { width: 112px; }
.w-f { width: 135px; }
.w-g { width: 94px; }
.w-h { width: 181px; }
.w-i { width: 94px; }
.w-j { width: 95px; }

.cells th {
  height: 20px;
  padding: 0 0 0 2px;
  border: solid #a0a0a0;
  border-width: 0 1px 1px 0;
  background: #fafafa;
  color: #3d3d3d;
  font-size: 14px;
  font-weight: normal;
  line-height: 16px;
}

.cells tbody th {
  height: 21px;
  padding: 1px 0 0;
}

.cells .current {
  background: #e95420;
  border-color: #c9481b;
  color: #fff;
  font-weight: bold;
}

.cells td {
  padding: 0 0 0 1px;
  border: solid #c0c0c0;
  border-width: 0 1px 1px 0;
  font-family: "DejaVu Sans", sans-serif;
  font-size: 15px;
  line-height: 17px;
  vertical-align: bottom;
  white-space: nowrap;
}

.cells .short th {
  height: 18px;
}

.cells .filled {
  border-color: #d4d4e0;
}

.cells .above-filled {
  border-bottom-color: #d4d4e0;
}

.cells .label {
  font-weight: bold;
}

.cells .heading {
  padding: 0;
  font-weight: bold;
  text-align: center;
}

.cells .heading.black {
  color: #000;
}

.cells .total {
  color: #6aa84f;
  font-weight: bold;
}

.range, .cursor-cell, .chart, .context-menu {
  position: absolute;
}

.range {
  border: 1px solid #0000e6;
}

.range-label {
  left: 41px;
  top: 59px;
  width: 194px;
  height: 17px;
}

.range-categories {
  left: 41px;
  top: 77px;
  width: 194px;
  height: 197px;
}

.range-values {
  left: 1237px;
  top: 77px;
  width: 94px;
  height: 197px;
}

.cursor-cell {
  left: 1236px;
  top: 58px;
  width: 96px;
  height: 19px;
  border: 2px solid #e95420;
}

.cursor-cell::after {
  content: "";
  position: absolute;
  right: -4px;
  bottom: -4px;
  width: 5px;
  height: 5px;
  background: #e95420;
}

.chart {
  left: 41px;
  top: 275px;
  width: 593px;
  height: 343px;
  background: #fff;
  font-family: "Liberation Sans", sans-serif;
  font-size: 13px;
}

.chart svg {
  display: block;
}

.context-menu {
  left: 334px;
  top: 419px;
  width: 200px;
  padding: 4px 0;
  border: 1px solid #909090;
  border-radius: 7px;
  background: #fafafa;
  box-shadow: 0 1px 3px rgba(0, 0, 0, .3);
}

.context-menu button {
  width: 100%;
  height: 25px;
  justify-content: flex-start;
  padding-left: 31px;
}

.context-menu hr {
  height: 1px;
  margin: 0;
  border: 0;
  background: #dcdcdc;
}

.pointer {
  position: absolute;
  left: 4px;
  top: 3px;
}

/* scrollbars */
.vscroll {
  flex: 0 0 12px;
  display: flex;
  flex-direction: column;
  align-items: center;
}

.splitter {
  width: 12px;
  height: 5px;
  border: solid #b9b9b9;
  border-width: 2px 3px;
  background: #000;
}

.vthumb {
  width: 6px;
  height: 48%;
  max-height: 368px;
  margin-top: 5px;
  border-radius: 3px;
  background: #8a8a8a;
}

.hscroll {
  display: flex;
  flex: 0 0 12px;
  align-items: center;
  justify-content: space-between;
  padding: 0 12px 0 4px;
}

.hthumb {
  width: 47%;
  max-width: 821px;
  height: 6px;
  border-radius: 3px;
  background: #8a8a8a;
}

.hsplitter {
  width: 5px;
  height: 12px;
  border: solid #b9b9b9;
  border-width: 3px 2px;
  background: #000;
}

.tabbar {
  display: flex;
  flex: 0 0 26px;
  align-items: center;
  gap: 9px;
  padding-left: 10px;
  border-bottom: 1px solid #b9b9b9;
}

.tabbar .add {
  margin-left: 7px;
}

.tab {
  align-self: stretch;
  margin-left: 2px;
  padding: 0 10px;
  border-bottom: 3px solid #999;
  background: #fff;
  font-size: 13px;
  font-weight: bold;
}

/* sidebar */
.sidebar {
  position: relative;
  display: flex;
  flex: 0 0 59px;
  flex-direction: column;
  align-items: center;
  padding-left: 2px;
  border-left: 1px solid #b9b9b9;
  border-bottom: 1px solid #b9b9b9;
}

.side-menu {
  width: 36px;
  height: 34px;
  margin-top: 2px;
}

.side-tab {
  width: 36px;
  height: 34px;
  margin-top: 11px;
  border: 1px solid #c4c4c4;
  border-radius: 5px;
  background: #d5d5d5;
}

.side-handle {
  position: absolute;
  left: -1px;
  top: 428px;
  width: 8px;
  height: 74px;
  border-radius: 0 2px 2px 0;
  background: #8f8f8f;
}

.statusbar {
  display: flex;
  flex: 0 0 20px;
  align-items: center;
  justify-content: space-between;
  padding: 0 26px 0 10px;
}

.status-sep {
  width: 1px;
  height: 14px;
  background: #dcdcdc;
}
```
FILE: script.js
```js
const columns = ['A', 'B', 'C', 'D', 'E', 'F', 'G', 'H', 'I', 'J', 'K', 'L', 'M', 'N', 'O'];
const months = ['Jan', 'Feb', 'Mar', 'Apr', 'May', 'Jun', 'Jul', 'Aug', 'Sep', 'Oct', 'Nov', 'Dec'];
const headings = ['Gas & Electric', 'Internet Access', 'Mobile Bill', 'Council Tax', 'Car Insurance', 'Food Bill', 'TV Licence / Netflix'];

// columns B, G and I change by month, the rest are fixed for the year
const gas = [45, 50, 45, 45, 35, 35, 35, 30, 45, 45, 45, 60];
const food2019 = [150, 150, 180, 150, 150, 180, 180, 130, 110, 115, 125, 125];
const total2019 = [399, 404, 429, 399, 389, 419, 419, 364, 359, 364, 374, 389];
const food2020 = [120, 125, 110, 130, 160, 130, 130, 130, 110, 115, 125, 125];
const total2020 = [359, 364, 349, 364, 399, 359, 359, 359, 354, 359, 364, 369];

const pounds = function (value) {
  return '£' + value.toLocaleString('en-GB') + '.00';
};

const cells = {};
const put = function (row, col, text, type) {
  cells[col + row] = {text: text, type: type};
};

put(1, 'A', 'Personal Costs - 2019', 'label');
headings.forEach(function (text, i) {
  put(2, columns[i + 1], text, 'heading');
  if (i > 2) put(19, columns[i + 1], text, 'heading black');
});
months.forEach(function (month, i) {
  put(3 + i, 'A', month, 'label');
  [gas[i], 31, 10, 95, 45, food2019[i], 23].forEach(function (value, c) {
    put(3 + i, columns[c + 1], pounds(value), 'value');
  });
  put(3 + i, 'I', pounds(total2019[i]), 'total');
  [97, 40, food2020[i], 25].forEach(function (value, c) {
    put(20 + i, columns[c + 4], pounds(value), 'value');
  });
  put(20 + i, 'I', pounds(total2020[i]), 'total');
});
[1140, 540, 1745, 276].forEach(function (value, c) {
  put(15, columns[c + 4], pounds(value), 'total');
});
[1164, 480, 1510, 300].forEach(function (value, c) {
  put(32, columns[c + 4], pounds(value), 'total');
});
put(15, 'I', pounds(4708), 'label');
put(32, 'I', pounds(4358), 'label');

const isFilled = function (row, c) {
  if (row === 2 || row === 19) return c < 8;
  return c < 9 && ((row > 2 && row < 16) || (row > 19 && row < 33));
};

document.getElementById('columns').innerHTML = '<th></th>' + columns.map(function (name) {
  return '<th scope="col"' + (name === 'J' ? ' class="current"' : '') + '>' + name + '</th>';
}).join('');

let html = '';
for (let row = 1; row <= 40; row++) {
  const short = (row > 1 && row < 16) || (row > 18 && row < 32);
  html += '<tr' + (short ? ' class="short"' : '') + '>';
  html += '<th scope="row"' + (row === 3 ? ' class="current"' : '') + '>' + row + '</th>';
  columns.forEach(function (name, c) {
    const cell = cells[name + row];
    const classes = [];
    if (cell) classes.push(cell.type);
    if (isFilled(row, c)) classes.push('filled');
    else if (row !== 2 && isFilled(row + 1, c)) classes.push('above-filled');
    html += '<td class="' + classes.join(' ') + '">' + (cell ? cell.text.replace('&', '&amp;') : '') + '</td>';
  });
  html += '</tr>';
}
document.getElementById('rows').innerHTML = html;
```
